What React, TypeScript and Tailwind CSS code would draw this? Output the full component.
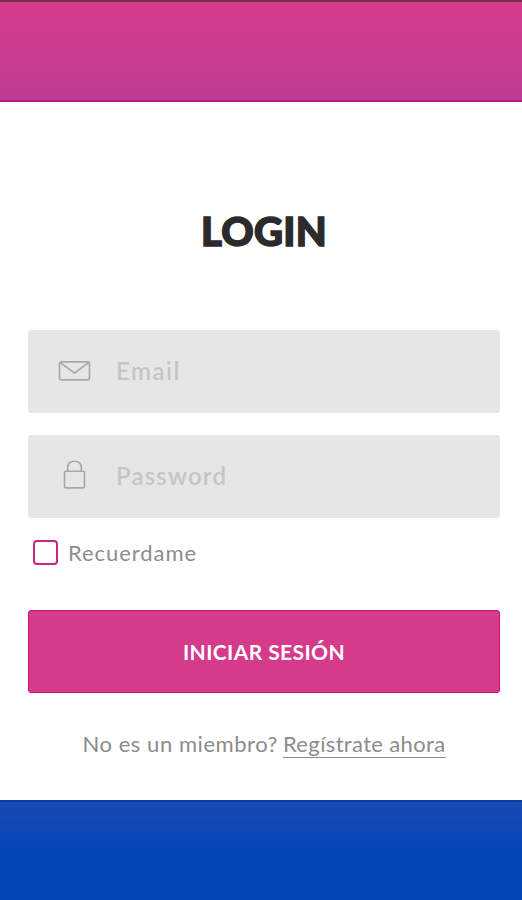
function MailIcon() {
  return (
    <svg className="mb-0.5" width="34" height="24" viewBox="0 0 34 24" fill="none" stroke="#a9a9a9" strokeWidth="1.7" strokeLinejoin="round">
      <rect x="2.5" y="2.8" width="30" height="18" rx="2" />
      <path d="M3.2 3.6 L17.5 14 L31.8 3.6" />
    </svg>
  );
}

function LockIcon() {
  return (
    <svg className="mb-1.5" width="34" height="32" viewBox="0 0 34 32" fill="none" stroke="#a6a6a6" strokeWidth="1.6" strokeLinejoin="round">
      <rect x="7.5" y="13.3" width="20" height="16.6" rx="1.2" />
      <path d="M10.7 13.3 V9.6 C10.7 5.6 13.4 3.2 17.5 3.2 C21.6 3.2 24.3 5.6 24.3 9.6 V13.3" />
    </svg>
  );
}

export default function App() {
  return (
    <div className="flex h-[900px] w-[522px] flex-col overflow-hidden bg-white font-['Lato',sans-serif]">
      <header className="h-[102px] shrink-0 border-t-2 border-b-2 border-t-[#743451] border-b-[#b3158a] bg-linear-to-b from-[#d83b8c] to-[#bd3c94]" />
      <main className="flex h-[698px] shrink-0 flex-col pr-[22px] pl-7">
        <h1 className="mt-[104px] h-[50px] text-center text-[40px] leading-[50px] font-black tracking-[0.3px] text-[#2b2b2b] [-webkit-text-stroke:1.5px_#2b2b2b]">
          LOGIN
        </h1>
        <div className="mt-[74px] flex h-[83px] items-center rounded-[3px] bg-[#e6e6e6] pl-[29px] text-[#c5c5c5]">
          <MailIcon />
          <span className="mb-0.5 ml-[25px] text-2xl font-semibold tracking-[1.5px]">Email</span>
        </div>
        <div className="mt-[22px] flex h-[83px] items-center rounded-[3px] bg-[#e6e6e6] pl-[29px] text-[#c5c5c5]">
          <LockIcon />
          <span className="mb-0.5 ml-[25px] text-2xl font-semibold tracking-[1.15px]">Password</span>
        </div>
        <label className="mt-[20px] flex h-[29px] items-center pl-[5px]">
          <span className="size-[25px] rounded-[4px] border-2 border-[#cf2384] bg-white" />
          <span className="mb-px ml-[10px] text-[22px] tracking-[0.95px] text-[#8c8c8c]">Recuerdame</span>
        </label>
        <button className="mt-[43px] h-[83px] rounded-[3px] border border-[#c9117c] bg-[#d53a8b] text-[21px] font-bold tracking-[0.4px] text-white">
          INICIAR SESIÓN
        </button>
        <p className="mt-[37px] flex justify-center text-[22px] leading-[27px] text-[#8c8c8c]">
          <span className="tracking-[0.55px]">No es un miembro?</span>
          <a className="ml-[5px] border-b border-[#8c8c8c] tracking-[0.35px]">Regístrate ahora</a>
        </p>
      </main>
      <footer className="h-[100px] shrink-0 border-t-2 border-[#0c3aa0] bg-linear-to-b from-[#1949b4] via-[#0446b8] to-[#0046b8]" />
    </div>
  );
}
